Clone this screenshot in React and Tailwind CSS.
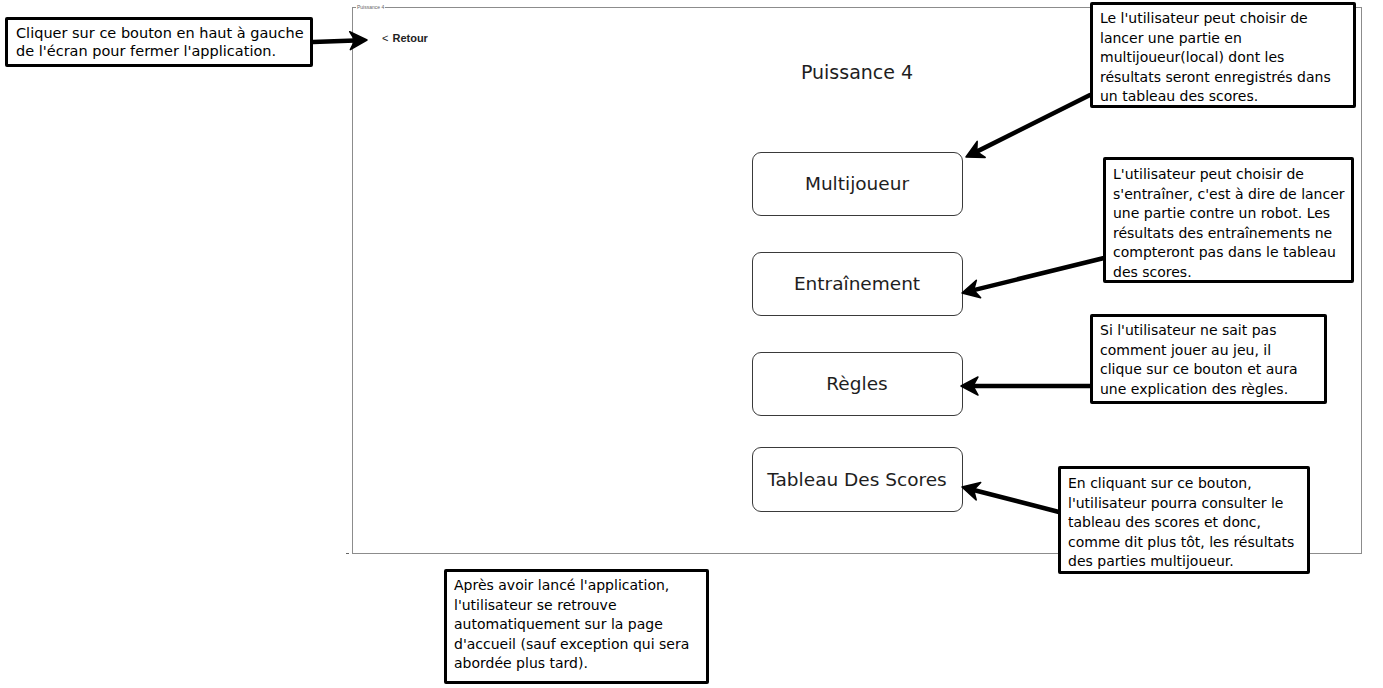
import React from "react";

const ANN = { fontFamily: '"DejaVu Sans", "Open Sans", sans-serif' };

function Callout({ className, lines, textClass = "text-[14px] leading-[19.5px]" }) {
  return (
    <div
      className={`absolute bg-white border-[3px] border-black rounded-[2px] text-black ${textClass} ${className}`}
      style={ANN}
    >
      {lines.map((l, i) => (
        <div key={i} className="whitespace-nowrap">
          {l}
        </div>
      ))}
    </div>
  );
}

function WireButton({ label, h = "h-[64px]" }) {
  return (
    <div
      className={`w-[211px] ${h} flex items-center justify-center rounded-[9px] border-[1.5px] border-[#3a3a3a] text-[18.5px] text-[#1e1e1e]`}
      style={ANN}
    >
      {label}
    </div>
  );
}

function Arrow({ x1, y1, x2, y2 }) {
  const dx = x2 - x1;
  const dy = y2 - y1;
  const len = Math.hypot(dx, dy);
  const ux = dx / len;
  const uy = dy / len;
  const px = -uy;
  const py = ux;
  const L = 17;
  const W = 9;
  const bx = x2 - ux * L;
  const by = y2 - uy * L;
  const nx = x2 - ux * (L - 5);
  const ny = y2 - uy * (L - 5);
  const pts = `${x2},${y2} ${bx + px * W},${by + py * W} ${nx},${ny} ${bx - px * W},${by - py * W}`;
  return (
    <g>
      <line x1={x1} y1={y1} x2={nx} y2={ny} stroke="#000" strokeWidth="4.5" strokeLinecap="round" />
      <polygon points={pts} fill="#000" stroke="#000" strokeWidth="1.5" strokeLinejoin="round" />
    </g>
  );
}

export default function App() {
  return (
    <div className="relative w-[1383px] h-[688px] bg-white overflow-hidden">
      {/* Wireframe window */}
      <div className="absolute left-[352px] top-[7px] w-[1010px] h-[547px] border border-[#8c8c8c]">
        <span
          className="absolute top-[-5px] left-[3px] bg-white px-[1px] text-[5px] leading-[8px] text-[#666]"
          style={{ fontFamily: '"Liberation Sans", Arial, sans-serif' }}
        >
          Puissance 4
        </span>
        <div className="flex flex-col">
          <div
            className="flex gap-[4px] pl-[29px] pt-[24px] text-[11px] leading-[12px] font-bold text-[#222]"
            style={{ fontFamily: '"Liberation Sans", Arial, sans-serif' }}
          >
            <span className="font-normal">&lt;</span>
            <span>Retour</span>
          </div>
          <div className="flex flex-col items-center">
            <div className="mt-[16px] text-[19px] leading-[24px] text-[#1e1e1e]" style={ANN}>
              Puissance 4
            </div>
            <div className="mt-[68px] flex flex-col items-center gap-[36px]">
              <WireButton label="Multijoueur" />
              <WireButton label="Entraînement" />
              <WireButton label="Règles" />
            </div>
            <div className="mt-[31px]">
              <WireButton label="Tableau Des Scores" h="h-[65px]" />
            </div>
          </div>
        </div>
      </div>
      <div className="absolute left-[346px] top-[553px] w-[3px] h-[1px] bg-[#666]" />

      {/* Arrows */}
      <svg className="absolute inset-0 pointer-events-none" width="1383" height="688">
        <Arrow x1={313} y1={42} x2={367} y2={40} />
        <Arrow x1={1090} y1={95} x2={966} y2={157} />
        <Arrow x1={1104} y1={258} x2={962} y2={293} />
        <Arrow x1={1091} y1={386} x2={961} y2={386} />
        <Arrow x1={1059} y1={512} x2={962} y2={487} />
      </svg>

      {/* Callouts */}
      <Callout
        className="left-[5px] top-[17px] w-[308px] h-[50px] pl-[8px] pt-[4px]"
        textClass="text-[14.5px] leading-[18px]"
        lines={["Cliquer sur ce bouton en haut à gauche", "de l'écran pour fermer l'application."]}
      />
      <Callout
        className="left-[1090px] top-[2px] w-[266px] h-[106px] pl-[7px] pt-[4px]"
        lines={[
          "Le l'utilisateur peut choisir de",
          "lancer une partie en",
          "multijoueur(local) dont les",
          "résultats seront enregistrés dans",
          "un tableau des scores.",
        ]}
      />
      <Callout
        className="left-[1103px] top-[157px] w-[251px] h-[126px] pl-[7px] pt-[5px]"
        lines={[
          "L'utilisateur peut choisir de",
          "s'entraîner, c'est à dire de lancer",
          "une partie contre un robot. Les",
          "résultats des entraînements ne",
          "compteront pas dans le tableau",
          "des scores.",
        ]}
      />
      <Callout
        className="left-[1090px] top-[314px] w-[237px] h-[90px] pl-[7px] pt-[4px]"
        lines={[
          "Si l'utilisateur ne sait pas",
          "comment jouer au jeu, il",
          "clique sur ce bouton et aura",
          "une explication des règles.",
        ]}
      />
      <Callout
        className="left-[1058px] top-[466px] w-[252px] h-[108px] pl-[7px] pt-[5px]"
        lines={[
          "En cliquant sur ce bouton,",
          "l'utilisateur pourra consulter le",
          "tableau des scores et donc,",
          "comme dit plus tôt, les résultats",
          "des parties multijoueur.",
        ]}
      />
      <Callout
        className="left-[444px] top-[569px] w-[265px] h-[115px] pl-[7px] pt-[4px]"
        lines={[
          "Après avoir lancé l'application,",
          "l'utilisateur se retrouve",
          "automatiquement sur la page",
          "d'accueil (sauf exception qui sera",
          "abordée plus tard).",
        ]}
      />
    </div>
  );
}
